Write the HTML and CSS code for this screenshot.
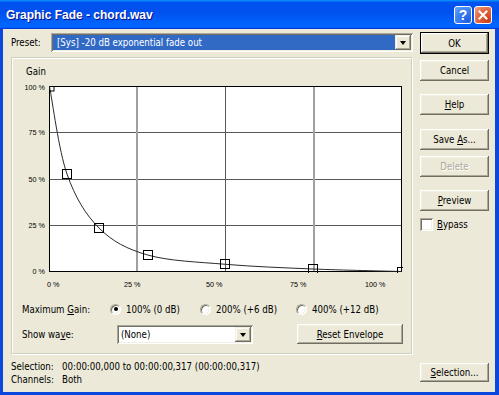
FILE: index.html
```html
<!DOCTYPE html>
<html>
<head>
<meta charset="utf-8">
<link rel="stylesheet" href="styles.css">
</head>
<body>
<div class="window">
  <div class="titlebar">
    <span class="title">Graphic Fade - chord.wav</span>
    <div class="tb-buttons">
      <span class="tb-btn tb-help">?</span>
      <span class="tb-btn tb-close"><svg width="10" height="10" viewBox="0 0 10 10"><path d="M1.5 1.5 L8.5 8.5 M8.5 1.5 L1.5 8.5" stroke="#fff" stroke-width="2" stroke-linecap="square"/></svg></span>
    </div>
  </div>
  <div class="client">
    <div class="main">
      <div class="preset-row">
        <span class="preset-label">Preset:</span>
        <div class="combo combo-preset">
          <span class="combo-text combo-selected">[Sys] -20 dB exponential fade out</span>
          <span class="dd"><i class="tri"></i></span>
        </div>
      </div>
      <div class="frame">
        <svg class="graph" width="399" height="237" viewBox="12 58 399 237">
          <defs>
            <clipPath id="plotclip"><rect x="49" y="86" width="354" height="187"/></clipPath>
          </defs>
          <text class="glabel" x="26" y="74.5">Gain</text>
          <rect x="49.5" y="86.5" width="352" height="185" fill="#fff"/>
          <line class="hgrid" x1="50" y1="132.5" x2="401" y2="132.5"/>
          <line class="hgrid" x1="50" y1="179.5" x2="401" y2="179.5"/>
          <line class="hgrid" x1="50" y1="225.5" x2="401" y2="225.5"/>
          <line class="vgrid-light" x1="137" y1="87" x2="137" y2="271"/>
          <line class="hgrid" x1="225.5" y1="87" x2="225.5" y2="271"/>
          <line class="vgrid-light" x1="314" y1="87" x2="314" y2="271"/>
          <rect class="plotframe" x="49.5" y="86.5" width="352" height="185"/>
          <g clip-path="url(#plotclip)">
            <path class="curve" d="M49.5,86.5 C52.42,101.08 58.75,150.42 67,174 C75.25,197.58 85.55,214.5 99,228 C112.45,241.5 126.62,248.95 147.7,255 C168.78,261.05 197.95,261.97 225.5,264.3 C253.05,266.63 283.67,267.8 313,269 C342.33,270.2 386.75,271.08 401.5,271.5"/>
            <rect class="pt" x="45" y="82" width="9" height="9"/>
            <rect class="pt" x="62.5" y="169.5" width="9" height="9"/>
            <rect class="pt" x="94.5" y="223.5" width="9" height="9"/>
            <rect class="pt" x="143.5" y="250.5" width="9" height="9"/>
            <rect class="pt" x="220.5" y="259.5" width="9" height="9"/>
            <rect class="pt" x="308.5" y="264.5" width="9" height="9"/>
            <rect class="pt" x="397.5" y="267.5" width="9" height="9"/>
          </g>
          <text class="axis" x="45" y="89.8" text-anchor="end">100 %</text>
          <text class="axis" x="45" y="135.3" text-anchor="end">75 %</text>
          <text class="axis" x="45" y="181.8" text-anchor="end">50 %</text>
          <text class="axis" x="45" y="228.3" text-anchor="end">25 %</text>
          <text class="axis" x="45" y="274.3" text-anchor="end">0 %</text>
          <text class="axis" x="47" y="286.5">0 %</text>
          <text class="axis" x="124" y="286.5">25 %</text>
          <text class="axis" x="206" y="286.5">50 %</text>
          <text class="axis" x="290" y="286.5">75 %</text>
          <text class="axis" x="365" y="286.5">100 %</text>
        </svg>
        <div class="gain-row">
          <span class="row-label">Maximum <u>G</u>ain:</span>
          <label class="opt"><span class="radio checked"></span><span>100% (0 dB)</span></label>
          <label class="opt"><span class="radio"></span><span>200% (+6 dB)</span></label>
          <label class="opt"><span class="radio"></span><span>400% (+12 dB)</span></label>
        </div>
        <div class="wave-row">
          <span class="row-label wave-label">Show wa<u>v</u>e:</span>
          <div class="combo combo-wave">
            <span class="combo-text">(None)</span>
            <span class="dd"><i class="tri"></i></span>
          </div>
          <span class="btn btn-reset"><span><u>R</u>eset Envelope</span></span>
        </div>
      </div>
      <div class="info">
        <div class="info-row"><span class="info-key">Selection:</span><span>00:00:00,000 to 00:00:00,317 (00:00:00,317)</span></div>
        <div class="info-row"><span class="info-key">Channels:</span><span>Both</span></div>
      </div>
    </div>
    <div class="side">
      <span class="btn btn-default btn-ok"><span>OK</span></span>
      <span class="btn btn-cancel"><span>Cancel</span></span>
      <span class="btn btn-help"><span><u>H</u>elp</span></span>
      <span class="btn btn-saveas"><span>Save <u>A</u>s...</span></span>
      <span class="btn btn-delete disabled"><span>Delete</span></span>
      <span class="btn btn-preview"><span><u>P</u>review</span></span>
      <label class="bypass"><span class="checkbox"></span><span><u>B</u>ypass</span></label>
      <span class="btn btn-selection"><span><u>S</u>election...</span></span>
    </div>
  </div>
</div>
</body>
</html>
```

FILE: styles.css
```css
html, body {
  margin: 0;
  padding: 0;
}

body {
  width: 499px;
  height: 395px;
  overflow: hidden;
  font-family: "DejaVu Sans Condensed", "Liberation Sans", sans-serif;
  font-size: 9.6px;
  color: #000;
}

u {
  text-decoration: underline;
  text-underline-offset: 1px;
}

.window {
  width: 499px;
  height: 395px;
  box-sizing: border-box;
  display: flex;
  flex-direction: column;
  background: #0a47dc;
}

.titlebar {
  height: 29px;
  flex: none;
  display: flex;
  align-items: center;
  justify-content: space-between;
  padding: 0 7px 0 6px;
  background: linear-gradient(180deg, #0997ff, #0053ee 8%, #0050ee 40%, #0066ff 88%, #0066ff 93%, #005bff 95%, #003dd7 96%, #003dd7);
}

.title {
  font-family: "Liberation Sans", sans-serif;
  font-weight: bold;
  font-size: 12px;
  color: #fff;
  text-shadow: 1px 1px #0f1089;
  padding-top: 1px;
}

.tb-buttons {
  display: flex;
  gap: 2px;
}

.tb-btn {
  width: 18px;
  height: 18px;
  box-sizing: border-box;
  border: 1px solid #fff;
  border-radius: 3px;
  display: flex;
  align-items: center;
  justify-content: center;
  color: #fff;
  font-family: "Liberation Sans", sans-serif;
  font-weight: bold;
  font-size: 14px;
}

.tb-help {
  background: radial-gradient(circle at 80% 85%, #1f5fe0 0%, #3a80f3 55%, #6aa6ff 100%);
}

.tb-close {
  background: radial-gradient(circle at 85% 85%, #c6401c 0%, #e2643f 55%, #f0a58a 100%);
}

.client {
  flex: 1;
  margin: 0 4px 3px 3px;
  background: #ece9d8;
  display: flex;
}

.main {
  width: 402px;
  margin-left: 8px;
  display: flex;
  flex-direction: column;
}

.preset-row {
  margin-top: 4px;
  height: 19px;
  display: flex;
  align-items: center;
}

.preset-label {
  width: 40px;
}

/* classic sunken field */
.combo {
  height: 19px;
  box-sizing: border-box;
  padding: 2px;
  display: flex;
  background: #fff;
  box-shadow: inset 1px 1px #aca899, inset -1px -1px #fff, inset 2px 2px #716f64, inset -2px -2px #f1efe2;
}

.combo-preset {
  width: 362px;
}

.combo-text {
  flex: 1;
  display: flex;
  align-items: center;
  padding-left: 2px;
  white-space: nowrap;
  overflow: hidden;
}

.combo-selected {
  background: #316ac5;
  color: #fff;
  padding-left: 4px;
}

.dd {
  width: 16px;
  flex: none;
  display: flex;
  align-items: center;
  justify-content: center;
  background: #ece9d8;
  box-shadow: inset -1px -1px #716f64, inset 1px 1px #f1efe2, inset -2px -2px #aca899, inset 2px 2px #fff;
}

.tri {
  width: 0;
  height: 0;
  border-left: 3.5px solid transparent;
  border-right: 3.5px solid transparent;
  border-top: 4px solid #000;
}

.frame {
  margin-top: 5px;
  width: 401px;
  height: 297px;
  box-sizing: border-box;
  border: 1px solid #d0d0bf;
  box-shadow: inset 1px 1px #fff, 1px 1px #fff;
  display: flex;
  flex-direction: column;
}

.graph {
  display: block;
  flex: none;
}

.glabel {
  font-family: "DejaVu Sans Condensed", "Liberation Sans", sans-serif;
  font-size: 9.6px;
  fill: #000;
}

.axis {
  font-family: "Liberation Sans", sans-serif;
  font-size: 7.2px;
  fill: #000;
}

.hgrid {
  stroke: #585858;
  stroke-width: 1;
}

.vgrid-light {
  stroke: #a0a0a0;
  stroke-width: 2;
}

.plotframe {
  fill: none;
  stroke: #000;
  stroke-width: 1;
}

.curve {
  fill: none;
  stroke: #2a2a2a;
  stroke-width: 1;
}

.pt {
  fill: none;
  stroke: #000;
  stroke-width: 1;
}

.gain-row {
  margin-top: 6px;
  height: 16px;
  padding-left: 10px;
  display: grid;
  grid-template-columns: 88px 90px 96px auto;
  align-items: center;
}

.opt {
  display: flex;
  align-items: center;
  gap: 5px;
}

.radio {
  width: 11px;
  height: 11px;
  box-sizing: border-box;
  border-radius: 50%;
  background: #fff;
  border: 1px solid;
  border-color: #aca899 #fff #fff #aca899;
  box-shadow: inset 1px 1px #716f64, inset -1px -1px #f1efe2;
  display: flex;
  align-items: center;
  justify-content: center;
}

.radio.checked::after {
  content: "";
  width: 4px;
  height: 4px;
  border-radius: 50%;
  background: #000;
}

.wave-row {
  margin-top: 7px;
  height: 20px;
  padding-left: 10px;
  display: flex;
  align-items: flex-end;
}

.wave-label {
  width: 95px;
  align-self: center;
}

.combo-wave {
  width: 136px;
}

.btn {
  box-sizing: border-box;
  height: 21px;
  display: flex;
  align-items: center;
  justify-content: center;
  background: #ece9d8;
  box-shadow: inset -1px -1px #716f64, inset 1px 1px #fff, inset -2px -2px #aca899, inset 2px 2px #f1efe2;
  white-space: nowrap;
}

.btn-reset {
  width: 106px;
  height: 20px;
  margin-left: 44px;
}

.info {
  margin-top: 7px;
  line-height: 12.5px;
}

.info-row {
  display: flex;
}

.info-key {
  width: 51px;
}

.side {
  width: 69px;
  margin-left: 7px;
  display: flex;
  flex-direction: column;
}

.side .btn {
  width: 69px;
}

.btn-default {
  height: 22px;
  border: 1px solid #000;
}

.btn-ok { margin-top: 3px; }
.btn-cancel { margin-top: 6px; }
.btn-help { margin-top: 13px; }
.btn-saveas { margin-top: 14px; }
.btn-delete { margin-top: 6px; }
.btn-preview { margin-top: 13px; }

.disabled {
  color: #aca899;
  text-shadow: 1px 1px #fff;
}

.bypass {
  margin-top: 7px;
  height: 13px;
  display: flex;
  align-items: center;
  gap: 4px;
}

.checkbox {
  width: 13px;
  height: 13px;
  box-sizing: border-box;
  background: #fff;
  box-shadow: inset 1px 1px #aca899, inset -1px -1px #fff, inset 2px 2px #716f64, inset -2px -2px #f1efe2;
}

.btn-selection {
  margin-top: auto;
  margin-bottom: 10px;
  height: 19px;
}
```
